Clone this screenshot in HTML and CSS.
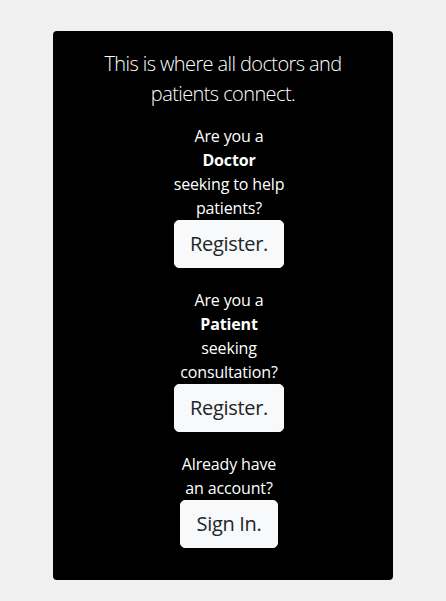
FILE: index.html
```html
<!DOCTYPE html>
<html lang="en">
<head>
<meta charset="utf-8">
<title>Connect</title>
<link rel="stylesheet" href="styles.css">
</head>
<body>
<main class="card">
  <p class="lead">This is where all doctors and<br>patients connect.</p>
  <section class="block">
    <p class="ask">Are you a<br><strong>Doctor</strong><br>seeking to help<br>patients?</p>
    <button class="btn" type="button">Register.</button>
  </section>
  <section class="block">
    <p class="ask">Are you a<br><strong>Patient</strong><br>seeking<br>consultation?</p>
    <button class="btn" type="button">Register.</button>
  </section>
  <section class="block">
    <p class="ask">Already have<br>an account?</p>
    <button class="btn" type="button">Sign In.</button>
  </section>
</main>
</body>
</html>
```

FILE: styles.css
```css
html, body {
  margin: 0;
  padding: 0;
  background: #f0f0f0;
}
body {
  font-family: "Open Sans", "Noto Sans", "Liberation Sans", sans-serif;
  padding-top: 31px;
  padding-bottom: 21px;
}
.card {
  width: 340px;
  height: 549px;
  box-sizing: border-box;
  margin: 0 auto;
  background: #000;
  border-radius: 4px;
  color: #fff;
  display: flex;
  flex-direction: column;
  align-items: center;
  padding-top: 18px;
}
.lead {
  margin: 0 0 15px;
  font-size: 20px;
  font-weight: 300;
  line-height: 30px;
  letter-spacing: -0.6px;
  text-align: center;
}
.block {
  display: flex;
  flex-direction: column;
  align-items: center;
  margin-bottom: 20px;
  margin-left: 12px;
}
.ask {
  margin: 0;
  font-size: 16px;
  line-height: 24px;
  letter-spacing: -0.15px;
  text-align: center;
  white-space: nowrap;
}
.ask strong {
  font-weight: 700;
}
.btn {
  font-family: inherit;
  font-size: 20px;
  line-height: 30px;
  letter-spacing: -0.3px;
  padding: 8px 15px;
  background: #f8f9fa;
  color: #212529;
  border: 1px solid #f8f9fa;
  border-radius: 5px;
  cursor: pointer;
}
```
